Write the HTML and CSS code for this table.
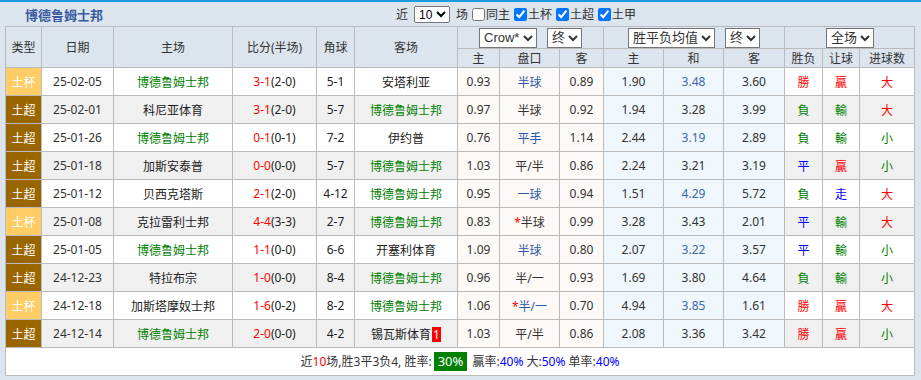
FILE: index.html
```html
<!DOCTYPE html>
<html lang="zh-CN">
<head>
    <meta charset="UTF-8">
    <meta name="viewport" content="width=device-width, initial-scale=1.0">
    <title>博德鲁姆士邦 近期战绩</title>
    <link rel="stylesheet" href="styles.css">
</head>
<body>
    <div class="panel">
        <div class="title-bar">
            <h2 class="team-title">博德鲁姆士邦</h2>
            <div class="filters">
                <span>近</span>
                <select class="sel-small"><option>10</option></select>
                <span>场</span>
                <label><input type="checkbox">同主</label>
                <label><input type="checkbox" checked>土杯</label>
                <label><input type="checkbox" checked>土超</label>
                <label><input type="checkbox" checked>土甲</label>
            </div>
        </div>

        <table class="record">
            <colgroup>
                <col style="width:36px"><col style="width:72px"><col style="width:119px"><col style="width:84px">
                <col style="width:38px"><col style="width:103px"><col style="width:42px"><col style="width:60px">
                <col style="width:44px"><col style="width:60px"><col style="width:60px"><col style="width:61px">
                <col style="width:38px"><col style="width:37px"><col style="width:55px">
            </colgroup>
            <thead>
                <tr class="head-1">
                    <th rowspan="2">类型</th>
                    <th rowspan="2">日期</th>
                    <th rowspan="2">主场</th>
                    <th rowspan="2">比分(半场)</th>
                    <th rowspan="2">角球</th>
                    <th rowspan="2">客场</th>
                    <th colspan="3"><select class="sel-head sel-crow"><option>Crow*</option></select><select class="sel-head sel-end"><option>终</option></select></th>
                    <th colspan="3"><select class="sel-head sel-avg"><option>胜平负均值</option></select><select class="sel-head sel-end"><option>终</option></select></th>
                    <th colspan="3"><select class="sel-head sel-full"><option>全场</option></select></th>
                </tr>
                <tr class="head-2">
                    <th>主</th><th>盘口</th><th>客</th>
                    <th>主</th><th>和</th><th>客</th>
                    <th>胜负</th><th>让球</th><th>进球数</th>
                </tr>
            </thead>
            <tbody>
                <tr>
                    <td class="cup">土杯</td><td class="date">25-02-05</td><td class="me">博德鲁姆士邦</td>
                    <td><span class="ft">3-1</span>(2-0)</td><td>5-1</td><td>安塔利亚</td>
                    <td class="ah">0.93</td><td class="ah line">半球</td><td class="ah">0.89</td>
                    <td class="eu">1.90</td><td class="eu draw">3.48</td><td class="eu">3.60</td>
                    <td class="w">勝</td><td class="w">贏</td><td class="w">大</td>
                </tr>
                <tr class="alt">
                    <td class="league">土超</td><td class="date">25-02-01</td><td>科尼亚体育</td>
                    <td><span class="ft">3-1</span>(2-0)</td><td>5-7</td><td class="me">博德鲁姆士邦</td>
                    <td class="ah">0.97</td><td class="ah line">半球</td><td class="ah">0.92</td>
                    <td class="eu">1.94</td><td class="eu draw">3.28</td><td class="eu">3.99</td>
                    <td class="l">負</td><td class="l">輸</td><td class="w">大</td>
                </tr>
                <tr>
                    <td class="league">土超</td><td class="date">25-01-26</td><td class="me">博德鲁姆士邦</td>
                    <td><span class="ft">0-1</span>(0-1)</td><td>7-2</td><td>伊约普</td>
                    <td class="ah">0.76</td><td class="ah line">平手</td><td class="ah">1.14</td>
                    <td class="eu">2.44</td><td class="eu draw">3.19</td><td class="eu">2.89</td>
                    <td class="l">負</td><td class="l">輸</td><td class="l">小</td>
                </tr>
                <tr class="alt">
                    <td class="league">土超</td><td class="date">25-01-18</td><td>加斯安泰普</td>
                    <td><span class="ft">0-0</span>(0-0)</td><td>5-7</td><td class="me">博德鲁姆士邦</td>
                    <td class="ah">1.03</td><td class="ah line">平/半</td><td class="ah">0.86</td>
                    <td class="eu">2.24</td><td class="eu draw">3.21</td><td class="eu">3.19</td>
                    <td class="d">平</td><td class="w">贏</td><td class="l">小</td>
                </tr>
                <tr>
                    <td class="league">土超</td><td class="date">25-01-12</td><td>贝西克塔斯</td>
                    <td><span class="ft">2-1</span>(2-0)</td><td>4-12</td><td class="me">博德鲁姆士邦</td>
                    <td class="ah">0.95</td><td class="ah line">一球</td><td class="ah">0.94</td>
                    <td class="eu">1.51</td><td class="eu draw">4.29</td><td class="eu">5.72</td>
                    <td class="l">負</td><td class="d">走</td><td class="w">大</td>
                </tr>
                <tr class="alt">
                    <td class="cup">土杯</td><td class="date">25-01-08</td><td>克拉雷利士邦</td>
                    <td><span class="ft">4-4</span>(3-3)</td><td>2-7</td><td class="me">博德鲁姆士邦</td>
                    <td class="ah">0.83</td><td class="ah line"><span class="star">*</span>半球</td><td class="ah">0.99</td>
                    <td class="eu">3.28</td><td class="eu draw">3.43</td><td class="eu">2.01</td>
                    <td class="d">平</td><td class="l">輸</td><td class="w">大</td>
                </tr>
                <tr>
                    <td class="league">土超</td><td class="date">25-01-05</td><td class="me">博德鲁姆士邦</td>
                    <td><span class="ft">1-1</span>(0-0)</td><td>6-6</td><td>开塞利体育</td>
                    <td class="ah">1.09</td><td class="ah line">半球</td><td class="ah">0.80</td>
                    <td class="eu">2.07</td><td class="eu draw">3.22</td><td class="eu">3.57</td>
                    <td class="d">平</td><td class="l">輸</td><td class="l">小</td>
                </tr>
                <tr class="alt">
                    <td class="league">土超</td><td class="date">24-12-23</td><td>特拉布宗</td>
                    <td><span class="ft">1-0</span>(0-0)</td><td>8-4</td><td class="me">博德鲁姆士邦</td>
                    <td class="ah">0.96</td><td class="ah line">半/一</td><td class="ah">0.93</td>
                    <td class="eu">1.69</td><td class="eu draw">3.80</td><td class="eu">4.64</td>
                    <td class="l">負</td><td class="l">輸</td><td class="l">小</td>
                </tr>
                <tr>
                    <td class="cup">土杯</td><td class="date">24-12-18</td><td>加斯塔摩奴士邦</td>
                    <td><span class="ft">1-6</span>(0-2)</td><td>8-2</td><td class="me">博德鲁姆士邦</td>
                    <td class="ah">1.06</td><td class="ah line"><span class="star">*</span>半/一</td><td class="ah">0.70</td>
                    <td class="eu">4.94</td><td class="eu draw">3.85</td><td class="eu">1.61</td>
                    <td class="w">勝</td><td class="w">贏</td><td class="w">大</td>
                </tr>
                <tr class="alt">
                    <td class="league">土超</td><td class="date">24-12-14</td><td class="me">博德鲁姆士邦</td>
                    <td><span class="ft">2-0</span>(0-0)</td><td>4-2</td><td>锡瓦斯体育<span class="red-card">1</span></td>
                    <td class="ah">1.03</td><td class="ah line">平/半</td><td class="ah">0.86</td>
                    <td class="eu">2.08</td><td class="eu draw">3.36</td><td class="eu">3.42</td>
                    <td class="w">勝</td><td class="w">贏</td><td class="l">小</td>
                </tr>
            </tbody>
            <tfoot>
                <tr>
                    <td colspan="15" class="summary">
                        近<span class="hl">10</span>场,胜3平3负4, 胜率:<span class="rate">30%</span>
                        贏率:<span class="pct">40%</span> 大:<span class="pct">50%</span> 单率:<span class="pct">40%</span>
                    </td>
                </tr>
            </tfoot>
        </table>
    </div>
</body>
</html>
```

FILE: styles.css
```css
* {
    box-sizing: border-box;
}

body {
    margin: 0;
    background: #dce4ee;
    font-family: "Noto Sans", "Noto Sans CJK SC", sans-serif;
    font-size: 12px;
    color: #333;
}

.panel {
    border-top: 2px solid #1a9be0;
}

.title-bar {
    display: flex;
    align-items: center;
    height: 24px;
    padding-left: 25px;
}

.team-title {
    flex: 0 0 371px;
    margin: 0;
    font-size: 13px;
    font-weight: 700;
    color: #3a5a9e;
}

.filters {
    display: flex;
    align-items: center;
    gap: 4px;
    color: #333;
}

.filters label {
    display: flex;
    align-items: center;
}

.filters input {
    margin: 0 1px 0 0;
    width: 13px;
    height: 13px;
}

.sel-small {
    height: 17px;
    font-size: 12px;
    padding: 0;
    margin: 0 2px;
}

.record {
    margin-left: 5px;
    width: 909px;
    table-layout: fixed;
    border-collapse: collapse;
    background: #fff;
}

.record th,
.record td {
    border: 1px solid #bbb;
    padding: 0;
    text-align: center;
    white-space: nowrap;
    overflow: hidden;
}

.record th {
    background: #dce4ee;
    font-weight: 400;
    color: #333;
}

.head-1 th {
    height: 22px;
}

.head-2 th {
    height: 19px;
}

.sel-head {
    height: 20px;
    font-size: 13px;
    padding: 0;
    margin: 0 5px;
    color: #333;
    background: #fff;
}

.record tbody td {
    height: 28px;
    color: #222;
}

.record tbody tr.alt td {
    background: #f0f0f0;
}

.record tbody td.cup,
.record tbody tr.alt td.cup {
    background: #ffcc66;
    color: #fff;
}

.record tbody td.league,
.record tbody tr.alt td.league {
    background: #996600;
    color: #fff;
}

.record tbody td.date {
    color: #333;
}

.record tbody td.me {
    color: #008000;
}

.ft {
    color: #f00;
}

.record tbody td.ah,
.record tbody tr.alt td.ah {
    background: #fdf9f6;
    color: #333;
}

.record tbody td.line {
    color: #2a5aa6;
}

.star {
    color: #f00;
}

.record tbody td.eu,
.record tbody tr.alt td.eu {
    background: #eff7fc;
    color: #333;
}

.record tbody td.draw {
    color: #3d66a8;
}

.record tbody td.w { color: #f00; }
.record tbody td.l { color: #008000; }
.record tbody td.d { color: #00f; }

.red-card {
    display: inline-block;
    background: #f00;
    color: #fff;
    padding: 0 1px;
    line-height: 15px;
    margin-left: 1px;
}

.summary {
    height: 28px;
    color: #333;
}

.summary .hl {
    color: #f00;
}

.summary .rate {
    display: inline-block;
    background: #007f00;
    color: #fff;
    font-size: 13px;
    line-height: 19px;
    padding: 0 4px;
    margin: 0 2px;
}

.summary .pct {
    color: #00f;
}
```
